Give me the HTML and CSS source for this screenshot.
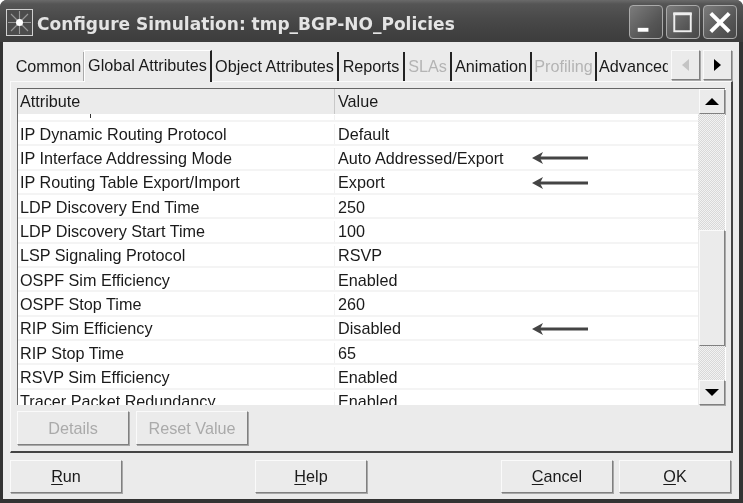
FILE: index.html
```html
<!DOCTYPE html>
<html lang="en">
<head>
<meta charset="utf-8">
<title>Configure Simulation</title>
<link rel="stylesheet" href="styles.css">
</head>
<body>
<div class="window">
  <header class="titlebar">
    <span class="app-icon">
      <svg width="28" height="28" viewBox="0 0 28 28"><rect x="0.5" y="0.5" width="26" height="26" fill="#4c4c4c" stroke="#d0d0d0"/><g stroke="#999" stroke-width="1.1"><path d="M13.500 2V25M2 13.500H25M5 5L22 22M22 5L5 22"/></g><circle cx="13.500" cy="13.500" r="3.500" fill="#fff"/></svg>
    </span>
    <span class="title">Configure Simulation: tmp_BGP-NO_Policies</span>
    <div class="win-buttons">
      <button class="win-btn"><svg width="33" height="34" viewBox="0 0 33 34"><rect x="8" y="22" width="11" height="4" fill="#fff"/></svg></button>
      <button class="win-btn"><svg width="33" height="34" viewBox="0 0 33 34"><rect x="7.500" y="7.500" width="17" height="18" fill="none" stroke="#eee" stroke-width="2"/><rect x="6.500" y="6" width="19" height="3" fill="#eee"/></svg></button>
      <button class="win-btn"><svg width="33" height="34" viewBox="0 0 33 34"><path d="M7 7L26 26M26 7L7 26" stroke="#fff" stroke-width="4"/></svg></button>
    </div>
  </header>
  <div class="client">
    <nav class="tabs">
      <span class="tab t-common">Common</span>
      <span class="tab active t-global">Global Attributes</span>
      <span class="tab t-object">Object Attributes</span>
      <span class="tab t-reports">Reports</span>
      <span class="tab off t-slas">SLAs</span>
      <span class="tab t-anim">Animation</span>
      <span class="tab off t-prof">Profiling</span>
      <span class="tab t-adv">Advanced</span>
      <span class="tab-arrows">
        <button class="raised tab-arrow"><svg width="7" height="12" viewBox="0 0 7 12"><path d="M7 0V12L0 6Z" fill="#c4c4c4"/></svg></button>
        <button class="raised tab-arrow"><svg width="7" height="12" viewBox="0 0 7 12"><path d="M0 0V12L7 6Z" fill="#000"/></svg></button>
      </span>
    </nav>
    <section class="panel">
      <div class="grid-wrap">
        <div class="grid">
          <div class="head">
            <span class="col-a">Attribute</span>
            <span class="col-b">Value</span>
          </div>
          <div class="rows">
            <div class="row stub"><span class="col-a"><i class="tick"></i></span><span class="col-b"></span></div>
            <div class="row"><span class="col-a">IP Dynamic Routing Protocol</span><span class="col-b">Default</span></div>
            <div class="row"><span class="col-a">IP Interface Addressing Mode</span><span class="col-b">Auto Addressed/Export<svg class="note" width="57" height="12" viewBox="0 0 57 12"><path d="M56 6H6" stroke="#444" stroke-width="3"/><path d="M0 6L11 0L8 6L11 12Z" fill="#444"/></svg></span></div>
            <div class="row"><span class="col-a">IP Routing Table Export/Import</span><span class="col-b">Export<svg class="note" width="57" height="12" viewBox="0 0 57 12"><path d="M56 6H6" stroke="#444" stroke-width="3"/><path d="M0 6L11 0L8 6L11 12Z" fill="#444"/></svg></span></div>
            <div class="row"><span class="col-a">LDP Discovery End Time</span><span class="col-b">250</span></div>
            <div class="row"><span class="col-a">LDP Discovery Start Time</span><span class="col-b">100</span></div>
            <div class="row"><span class="col-a">LSP Signaling Protocol</span><span class="col-b">RSVP</span></div>
            <div class="row"><span class="col-a">OSPF Sim Efficiency</span><span class="col-b">Enabled</span></div>
            <div class="row"><span class="col-a">OSPF Stop Time</span><span class="col-b">260</span></div>
            <div class="row"><span class="col-a">RIP Sim Efficiency</span><span class="col-b">Disabled<svg class="note" width="57" height="12" viewBox="0 0 57 12"><path d="M56 6H6" stroke="#444" stroke-width="3"/><path d="M0 6L11 0L8 6L11 12Z" fill="#444"/></svg></span></div>
            <div class="row"><span class="col-a">RIP Stop Time</span><span class="col-b">65</span></div>
            <div class="row"><span class="col-a">RSVP Sim Efficiency</span><span class="col-b">Enabled</span></div>
            <div class="row"><span class="col-a">Tracer Packet Redundancy</span><span class="col-b">Enabled</span></div>
          </div>
        </div>
        <div class="scrollbar">
          <button class="raised sb-btn"><svg width="14" height="7" viewBox="0 0 14 7"><path d="M0 7H14L7 0Z" fill="#000"/></svg></button>
          <div class="sb-track upper"></div>
          <div class="raised sb-thumb"></div>
          <div class="sb-track lower"></div>
          <button class="raised sb-btn"><svg width="14" height="7" viewBox="0 0 14 7"><path d="M0 0H14L7 7Z" fill="#000"/></svg></button>
        </div>
      </div>
      <div class="panel-actions">
        <button class="raised btn disabled">Details</button>
        <button class="raised btn disabled">Reset Value</button>
      </div>
    </section>
    <footer class="footer">
      <button class="raised btn big"><u>R</u>un</button>
      <button class="raised btn big help"><u>H</u>elp</button>
      <button class="raised btn big cancel"><u>C</u>ancel</button>
      <button class="raised btn big"><u>O</u>K</button>
    </footer>
  </div>
</div>
</body>
</html>
```
FILE: styles.css
```css
* { box-sizing: border-box; }
html, body { margin: 0; padding: 0; background: #fff; }
body { width: 743px; height: 503px; overflow: hidden; font-family: "Liberation Sans", Arial, sans-serif; font-size: 16.2px; color: #1a1a1a; }
button { font: inherit; color: inherit; padding: 0; margin: 0; }

.window { width: 743px; height: 503px; display: flex; flex-direction: column; background: #333; border-radius: 7px 7px 0 0; padding: 0 4px 4px 3px; filter: blur(0.4px); }

.titlebar { height: 42px; flex: none; margin: 0 -4px 0 -3px; padding: 3px 6px 0 6px; display: flex; align-items: center; gap: 3px; border-radius: 7px 7px 0 0; background: linear-gradient(#6a6a6a 0, #555 4px, #484848 20px, #3c3c3c 100%); }
.app-icon { display: flex; flex: none; }
.title { font-family: "DejaVu Sans", sans-serif; font-weight: bold; font-size: 17px; color: #e4e4e4; white-space: nowrap; flex: 1; padding-top: 3px; }
.win-buttons { display: flex; gap: 3px; margin-top: -1px; }
.win-btn { width: 34px; height: 34px; display: flex; border: 1px solid #aaa; border-radius: 4px; background: linear-gradient(135deg, #7c7c7c, #555 65%, #484848); }

.client { flex: 1; background: #ebebeb; display: flex; flex-direction: column; padding: 7px 6px 5px 7px; min-height: 0; }

.tabs { height: 32px; flex: none; display: flex; align-items: flex-end; position: relative; }
.tab { height: 29px; display: flex; align-items: center; justify-content: center; white-space: nowrap; border-right: 2px solid #222; overflow: hidden; }
.tab.active { height: 32px; border-top: 1px solid #fff; border-left: 1px solid #fff; padding-bottom: 3px; margin-bottom: -1px; z-index: 1; background: #ebebeb; }
.tab.off { color: #b4b4b4; }
.t-common { width: 70px; margin-left: 4px; border-right: 1px solid #aaa; }
.t-global { width: 128px; }
.t-object { width: 127px; }
.t-reports { width: 66px; }
.t-slas { width: 47px; }
.t-anim { width: 80px; }
.t-prof { width: 65px; }
.t-adv { width: 71px; border-right: 0; justify-content: flex-start; padding-left: 2px; }
.tab-arrows { display: flex; gap: 3px; margin-left: 3px; height: 30px; align-self: flex-start; margin-top: 1px; }
.tab-arrow { width: 29px; height: 30px; display: flex; align-items: center; justify-content: center; }

.raised { background: #ebebeb; border: 1px solid; border-color: #fafafa #808080 #808080 #fafafa; box-shadow: 1px 1px 0 #a8a8a8; }

.panel { height: 372px; flex: none; border: solid; border-width: 1px 2px 2px 1px; border-color: #fafafa #444 #444 #fafafa; padding: 6px 6px 0 6px; display: flex; flex-direction: column; }

.grid-wrap { display: flex; height: 317px; flex: none; border-top: 1px solid #666; border-left: 1px solid #666; }
.grid { width: 680px; flex: none; overflow: hidden; background: #fff; }
.head { height: 26px; display: flex; align-items: center; background: #ebebeb; border-bottom: 1px solid #fff; }
.head .col-a { border-right: 1px solid #c8c8c8; height: 100%; display: flex; align-items: center; }
.head .col-b { display: flex; align-items: center; }
.col-a { width: 317px; padding-left: 2px; flex: none; }
.col-b { flex: 1; padding-left: 3px; display: flex; align-items: center; position: relative; }
.rows { display: flex; flex-direction: column; }
.row { height: 24.33px; flex: none; display: flex; align-items: center; border-bottom: 2px solid #f4f4f4; padding-top: 2px; }
.row .col-a { border-right: 1px solid #f2f2f2; height: 100%; display: flex; align-items: center; }
.row.stub { height: 7px; padding-top: 0; }
.tick { display: block; width: 1px; height: 4px; margin-left: 70px; margin-top: -3px; background: #333; }
.note { position: absolute; left: 197px; top: 50%; margin-top: -6px; }

.scrollbar { width: 28px; flex: none; display: flex; flex-direction: column; background: #ebebeb; border-right: 1px solid #fff; }
.sb-btn { height: 25px; width: 26px; margin-left: 1px; flex: none; display: flex; align-items: center; justify-content: center; }
.sb-track { background: repeating-conic-gradient(#d8d8d8 0 25%, #f2f2f2 0 50%) 0 0 / 2px 2px; }
.sb-track.upper { height: 116px; flex: none; }
.sb-thumb { height: 116px; flex: none; width: 26px; margin-left: 1px; }
.sb-track.lower { flex: 1; }

.panel-actions { display: flex; gap: 7px; padding-top: 6px; }
.btn { width: 112px; height: 34px; display: flex; align-items: center; justify-content: center; }
.btn.disabled { color: #aaa; }
.btn u { text-underline-offset: 2px; }

.footer { flex: 1; display: flex; margin-top: 7px; padding-bottom: 2px; align-items: flex-start; }
.btn.big { width: 112px; height: 33px; }
.btn.big.help { margin-left: 133px; }
.btn.big.cancel { margin-left: 134px; margin-right: 6px; }
```
